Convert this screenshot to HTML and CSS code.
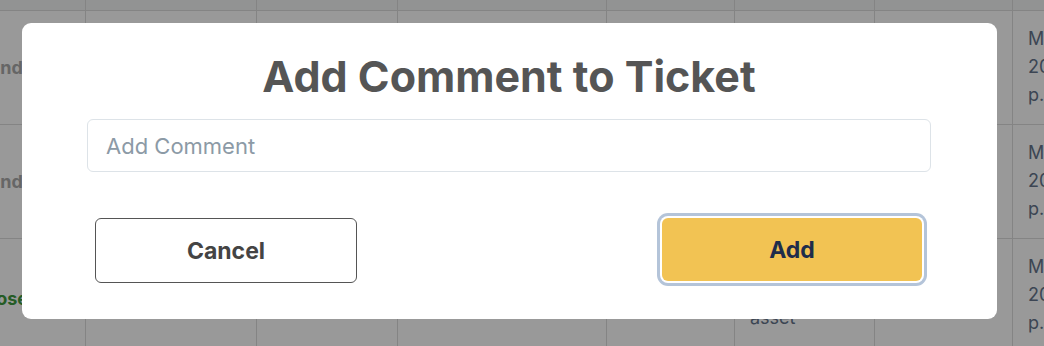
FILE: index.html
```html
<!DOCTYPE html>
<html lang="en">
<head>
  <meta charset="UTF-8">
  <title>Tickets - Add Comment</title>
  <link rel="stylesheet" href="styles.css">
</head>
<body>

  <!-- ticket table behind the modal -->
  <div class="tickets">
    <div class="row head">
      <div class="cell c1"></div><div class="cell c2"></div><div class="cell c3"></div><div class="cell c4"></div>
      <div class="cell c5"></div><div class="cell c6"></div><div class="cell c7"></div><div class="cell c8"></div>
    </div>
    <div class="row">
      <div class="cell c1"><span class="status pending">Pend</span></div>
      <div class="cell c2">Printer not working</div>
      <div class="cell c3">John Smith</div>
      <div class="cell c4">Hardware</div>
      <div class="cell c5">High</div>
      <div class="cell c6">Paper jam on floor 2</div>
      <div class="cell c7">IT Support</div>
      <div class="cell c8">Mar 12,<br>2024<br>p.m.</div>
    </div>
    <div class="row">
      <div class="cell c1"><span class="status pending">Pend</span></div>
      <div class="cell c2">VPN access</div>
      <div class="cell c3">Mary Jones</div>
      <div class="cell c4">Network</div>
      <div class="cell c5">Medium</div>
      <div class="cell c6">Cannot connect</div>
      <div class="cell c7">IT Support</div>
      <div class="cell c8">Mar 14,<br>2024<br>p.m.</div>
    </div>
    <div class="row">
      <div class="cell c1 last"><span class="status closed">Close</span></div>
      <div class="cell c2">Laptop request</div>
      <div class="cell c3">Alex Brown</div>
      <div class="cell c4">Hardware</div>
      <div class="cell c5">Low</div>
      <div class="cell c6 low">Missing hardware asset</div>
      <div class="cell c7">IT Support</div>
      <div class="cell c8">Mar 15,<br>2024<br>p.m.</div>
    </div>
  </div>

  <div class="overlay">
    <div class="modal">
      <h1 class="modal-title">Add Comment to Ticket</h1>
      <input class="comment-input" type="text" placeholder="Add Comment">
      <div class="modal-actions">
        <button class="btn btn-cancel">Cancel</button>
        <button class="btn btn-add">Add</button>
      </div>
    </div>
  </div>

</body>
</html>
```

FILE: styles.css
```css
body {
  margin: 0;
  font-family: Inter, "Noto Sans", sans-serif;
  background: #fff;
  overflow: hidden;
}

/* table */
.tickets {
  width: 1100px;
}

.row {
  display: flex;
  height: 114px;
  box-sizing: border-box;
  border-bottom: 1px solid #ddd;
}

.row.head {
  height: 11px;
  background: #f4f5f6;
}

.cell {
  flex: none;
  box-sizing: border-box;
  border-right: 1px solid #ddd;
  padding: 14px 15px;
  font-size: 18px;
  line-height: 28px;
  color: #64748b;
  overflow: hidden;
}

.row.head .cell {
  padding: 0;
}

.c1 { width: 86px; padding: 43px 0 0; }
.c1.last { padding-top: 46px; }
.c2 { width: 171px; }
.c3 { width: 141px; }
.c4 { width: 209px; }
.c5 { width: 128px; }
.c6 { width: 140px; }
.c7 { width: 138px; }
.c8 { width: 120px; }

.c6.low { padding-top: 9px; }

.status {
  display: block;
  font-weight: 700;
  white-space: nowrap;
  text-indent: -22px;
}

.pending { color: #aaa; }
.closed { color: #3f9a3f; }

/* modal */
.overlay {
  position: fixed;
  top: 0;
  left: 0;
  right: 0;
  bottom: 0;
  background: rgba(0, 0, 0, 0.4);
  padding: 23px 47px 0 22px;
}

.modal {
  background: #fff;
  border-radius: 9px;
  padding: 27px 66px 36px 65px;
  display: flex;
  flex-direction: column;
}

.modal-title {
  margin: 0 0 17px;
  text-align: center;
  font-size: 43px;
  line-height: 52px;
  font-weight: 700;
  color: #555;
}

.comment-input {
  box-sizing: border-box;
  height: 53px;
  border: 1px solid #dde3e8;
  border-radius: 6px;
  padding: 0 18px;
  font-family: Inter, "Noto Sans", sans-serif;
  font-size: 22px;
  color: #333;
  outline: none;
}

.comment-input::placeholder {
  color: #8c9aa6;
}

.modal-actions {
  display: flex;
  justify-content: space-between;
  margin-top: 46px;
  padding: 0 9px 0 8px;
}

.btn {
  box-sizing: border-box;
  font-family: Inter, "Noto Sans", sans-serif;
  font-size: 23px;
  font-weight: 700;
  border-radius: 6px;
  cursor: pointer;
}

.btn-cancel {
  width: 262px;
  height: 65px;
  background: #fff;
  border: 1px solid #555;
  color: #444;
}

.btn-add {
  width: 260px;
  height: 63px;
  background: #f2c353;
  border: none;
  color: #1f2d4b;
  box-shadow: 0 0 0 2px #fff, 0 0 0 5px #b4c4d9;
}
```
